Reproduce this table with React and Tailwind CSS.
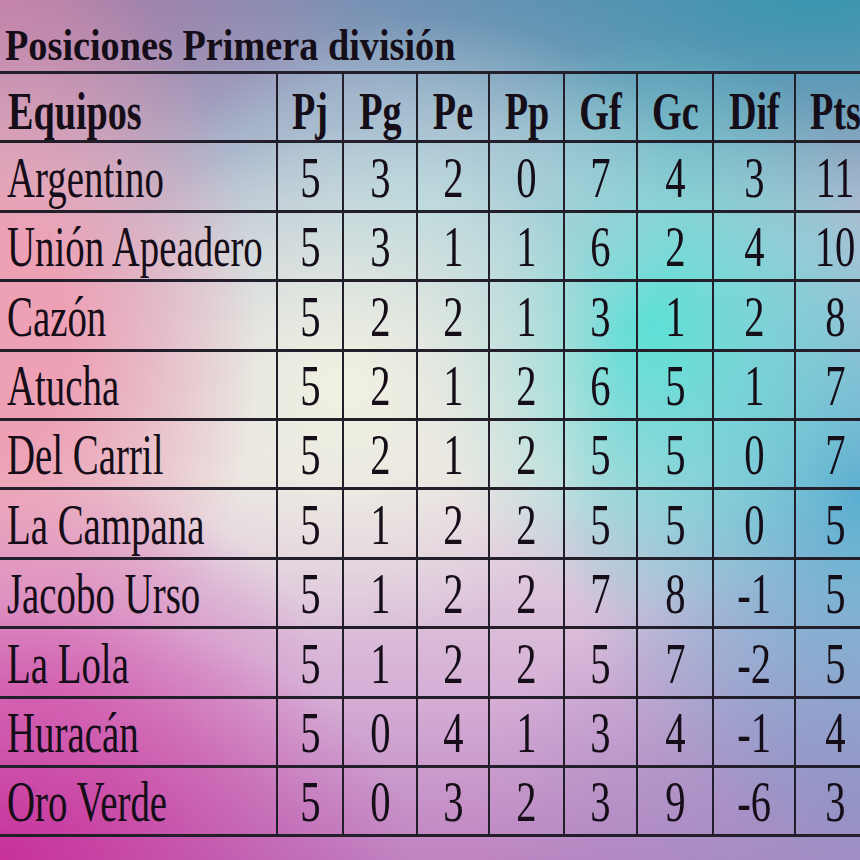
import React from "react";

const teams = [
  ["Argentino", 5, 3, 2, 0, 7, 4, 3, 11],
  ["Unión Apeadero", 5, 3, 1, 1, 6, 2, 4, 10],
  ["Cazón", 5, 2, 2, 1, 3, 1, 2, 8],
  ["Atucha", 5, 2, 1, 2, 6, 5, 1, 7],
  ["Del Carril", 5, 2, 1, 2, 5, 5, 0, 7],
  ["La Campana", 5, 1, 2, 2, 5, 5, 0, 5],
  ["Jacobo Urso", 5, 1, 2, 2, 7, 8, -1, 5],
  ["La Lola", 5, 1, 2, 2, 5, 7, -2, 5],
  ["Huracán", 5, 0, 4, 1, 3, 4, -1, 4],
  ["Oro Verde", 5, 0, 3, 2, 3, 9, -6, 3],
];

const heads = ["Pj", "Pg", "Pe", "Pp", "Gf", "Gc", "Dif", "Pts"];

const cell =
  "h-[69.4px] border-b-[3px] border-r-2 border-[#221e2a] flex items-end";

export default function App() {
  return (
    <div
      className="w-[860px] h-[860px] overflow-hidden text-[#150d18] bg-[radial-gradient(ellipse_48%_30%_at_0%_100%,#c8309a_0%,rgba(200,48,154,0)_100%),radial-gradient(ellipse_34%_24%_at_4%_80%,#d878bc_0%,rgba(216,120,188,0)_100%),radial-gradient(ellipse_30%_48%_at_0%_40%,#eea0b4_0%,#eea0b4_25%,rgba(238,160,180,0)_100%),radial-gradient(ellipse_32%_30%_at_40%_45%,#f0f2e2_0%,rgba(240,242,226,0)_100%),radial-gradient(ellipse_30%_22%_at_50%_24%,#b0d4dc_0%,rgba(176,212,220,0)_100%),radial-gradient(ellipse_28%_34%_at_76%_38%,#5ee0d6_0%,rgba(94,224,214,0)_100%),radial-gradient(ellipse_60%_24%_at_95%_0%,#3a96b0_0%,rgba(58,150,176,0)_100%),radial-gradient(ellipse_40%_22%_at_0%_0%,#b87aa6_0%,rgba(184,122,166,0)_100%),radial-gradient(ellipse_35%_40%_at_100%_58%,#5aaed0_0%,rgba(90,174,208,0)_100%),radial-gradient(ellipse_45%_30%_at_100%_95%,#9a90c4_0%,rgba(154,144,196,0)_100%),linear-gradient(180deg,#7f90b4_0%,#c9c8d8_30%,#e6dde2_55%,#d6b0d6_80%,#bf84c2_100%)]"
      style={{ fontFamily: '"Liberation Serif", "Times New Roman", serif' }}
    >
      <div className="h-[71px] flex items-end pb-[3px] pl-[5px]">
        <span className="inline-block origin-left scale-x-[0.85] text-[45px] leading-none font-bold whitespace-nowrap">
          Posiciones Primera división
        </span>
      </div>
      <div className="w-[876px] grid grid-cols-[278px_66px_74px_72px_75px_73px_76px_82px_80px] border-t-[3px] border-[#221e2a]">
        <div className={cell + " pl-[8px] pb-[2px]"}>
          <span className="inline-block origin-left scale-x-[0.72] text-[53px] leading-none font-bold whitespace-nowrap">
            Equipos
          </span>
        </div>
        {heads.map((h) => (
          <div key={h} className={cell + " justify-center pb-[2px]"}>
            <span className="inline-block scale-x-[0.72] text-[53px] leading-none font-bold whitespace-nowrap">
              {h}
            </span>
          </div>
        ))}
        {teams.map((t) => (
          <React.Fragment key={t[0]}>
            <div className={cell + " pl-[7px] pb-[3px]"}>
              <span className="inline-block origin-left scale-x-[0.67] text-[58px] leading-none whitespace-nowrap">
                {t[0]}
              </span>
            </div>
            {t.slice(1).map((v, i) => (
              <div key={i} className={cell + " justify-center pb-[3px]"}>
                <span className="inline-block scale-x-[0.7] text-[58px] leading-none whitespace-nowrap">
                  {v}
                </span>
              </div>
            ))}
          </React.Fragment>
        ))}
      </div>
    </div>
  );
}
